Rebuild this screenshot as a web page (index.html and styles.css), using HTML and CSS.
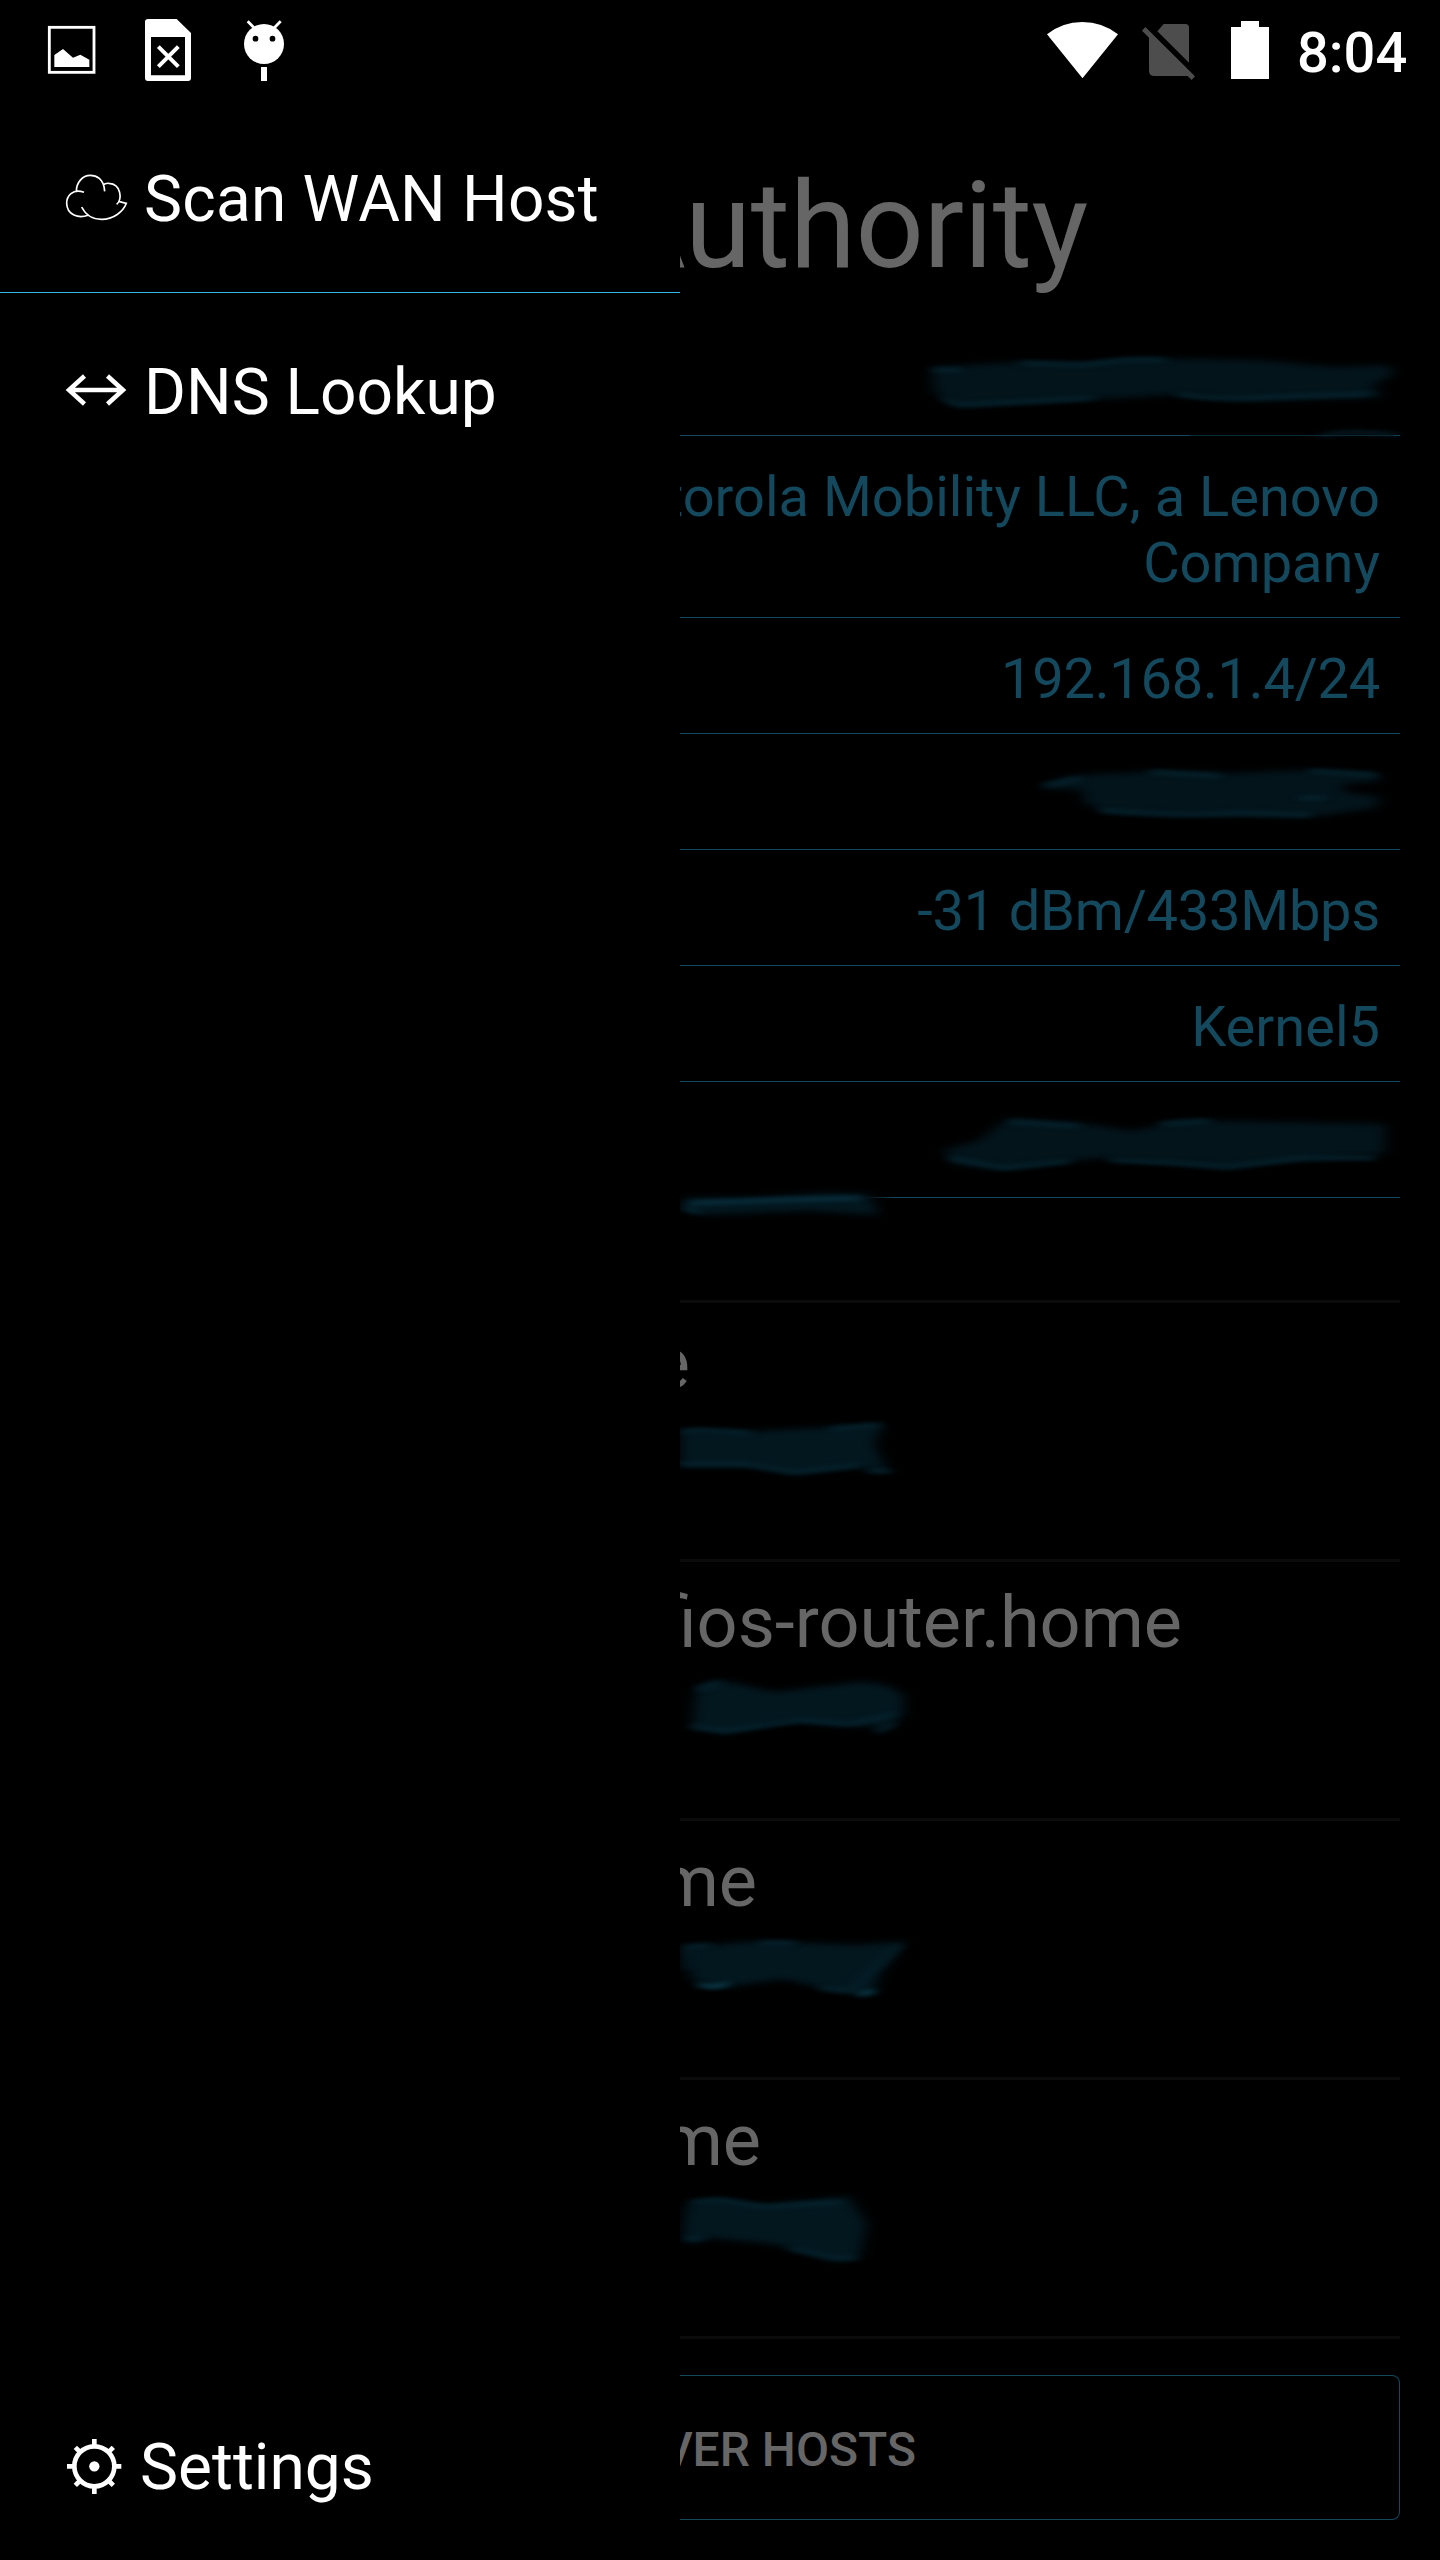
FILE: index.html
```html
<!DOCTYPE html>
<html lang="en">
<head>
<meta charset="utf-8">
<title>Port Authority</title>
<link rel="stylesheet" href="styles.css">
</head>
<body>
<div class="screen">
  <header class="status">
    <div class="status-group">
      <svg class="status-left" viewBox="0 0 960 288" aria-hidden="true">
        <rect x="148" y="82" width="134" height="135" fill="none" stroke="#fff" stroke-width="8.5"/>
        <path d="M163 201V165L189 147L219 173L241 164L268 179V201Z" fill="#fff"/>
        <path fill-rule="evenodd" d="M444 57H530L573 99V234Q573 243 564 243H444Q435 243 435 234V66Q435 57 444 57ZM453 111V226H555V111Z" fill="#fff"/>
        <path d="M475 140L535 200M535 140L475 200" stroke="#fff" stroke-width="12"/>
        <circle cx="792" cy="132" r="60" fill="#fff"/>
        <path d="M743 64L768 89M842 64L817 89" stroke="#fff" stroke-width="8.5"/>
        <circle cx="766.500" cy="116" r="8.500"/><circle cx="817.500" cy="116" r="8.500"/>
        <rect x="783" y="201" width="18" height="42" fill="#fff"/>
      </svg>
    </div>
    <div class="status-group">
      <svg class="status-right" viewBox="240 0 720 288" aria-hidden="true">
        <path d="M261 103Q307 66 367 66T474 103L367.500 235Z" fill="#fff"/>
        <path d="M611 72H676Q687 72 687 83V188L592 94ZM567 107L687 226L680 228H583Q567 228 567 212ZM556 81L705 229L695 240L546 92Z" fill="#4d4d4d"/>
        <path d="M843 63H897V81H927V237H813V81H843Z" fill="#fff"/>
      </svg>
      <span class="clock">8:04</span>
    </div>
  </header>
  <div class="panes">
    <nav class="drawer">
      <a class="item item-scan">
        <svg class="icon" viewBox="192 516 192 150" aria-hidden="true">
          <path d="M252 577C217 564 200 590 200 610C201 646 236 656 264 646M245 621C262 655 287 658 305 658C340 658 370 635 379 610L358 605M350 613C367 598 364 552 327 550Q316 549 309 555M314 574C312 535 287 526 271 526C247 526 229 548 229 574" fill="none" stroke="#fff" stroke-width="5"/>
        </svg>
        <span>Scan WAN Host</span>
      </a>
      <a class="item item-dns">
        <svg class="icon" viewBox="0 0 64 50" aria-hidden="true">
          <path d="M5 26H60M20.500 12L5 26L20.500 40M43.500 12L59 26L43.500 40" fill="none" stroke="#fff" stroke-width="4.500"/>
        </svg>
        <span>DNS Lookup</span>
      </a>
      <a class="item item-settings">
        <svg class="icon icon-gear" viewBox="192 168 180 180" aria-hidden="true">
          <g stroke="#fff" stroke-width="14" fill="none">
            <circle cx="283" cy="259" r="60"/>
            <path d="M283 199V177M283 319V342M223 259H201M343 259H364M239 215L226 202M327 215L340 202M239 303L226 316M327 303L340 316"/>
          </g>
          <circle cx="283" cy="259" r="15.500" fill="#fff"/>
        </svg>
        <span>Settings</span>
      </a>
    </nav>
    <main class="content">
      <h1 class="title">Authority</h1>
      <div class="row"></div>
      <div class="row"><span>torola Mobility LLC, a Lenovo</span><span>Company</span></div>
      <div class="row"><span class="tight">192.168.1.4/24</span></div>
      <div class="row"></div>
      <div class="row"><span class="tight">-31 dBm/433Mbps</span></div>
      <div class="row"><span>Kernel5</span></div>
      <div class="row row-last"></div>
      <div class="list-top"></div>
      <div class="host"><span class="name name-1">e</span></div>
      <div class="host"><span class="name name-2">fios-router.home</span></div>
      <div class="host"><span class="name name-3">me</span></div>
      <div class="host"><span class="name name-4">me</span></div>
      <div class="button"><span>VER HOSTS</span></div>

      <!-- brush strokes hiding private values -->
      <svg class="smears" viewBox="680 0 760 2560" aria-hidden="true">
        <defs>
          <filter id="soft" x="-10%" y="-30%" width="120%" height="160%" color-interpolation-filters="sRGB"><feGaussianBlur stdDeviation="7 3"/></filter>
          <filter id="edge" filterUnits="userSpaceOnUse" x="660" y="300" width="780" height="2000" color-interpolation-filters="sRGB"><feGaussianBlur stdDeviation="6 2"/></filter>
        </defs>
        <path d="M1190 434H1393V437H1190Z" fill="#000" opacity=".4"/>
        <path d="M1320 436Q1350 429 1396 435" fill="none" stroke="#06232e" stroke-width="3" filter="url(#edge)"/>
        <g fill="#03141b" filter="url(#soft)">
          <path d="M931 367L1018 362L1083 363L1137 358L1257 360L1336 367L1386 365L1396 373L1372 386L1385 397L1257 401L1172 395L1083 400L958 407L934 393Z"/>
          <path d="M1038 788Q1060 776 1083 775L1162 771L1232 773L1307 770L1376 773L1384 780L1340 785L1345 792L1381 797L1375 808L1312 817L1177 815L1108 813L1083 802L1083 790Z"/>
          <path d="M943 1150L978 1141L1008 1118L1088 1124L1133 1131L1182 1120L1282 1122L1385 1124V1154L1307 1160L1227 1168L1177 1164L1098 1158L1003 1170L953 1164Z"/>
        </g>
        <g fill="#03171f" filter="url(#soft)">
          <path d="M682 1198L760 1197L824 1193L869 1194L879 1215L809 1211L700 1215L685 1208Z"/>
          <path d="M680 1430L759 1431L884 1424L874 1443L888 1473L859 1467L794 1475L754 1467H680Z"/>
          <path d="M697 1686L720 1680L774 1692L859 1682Q890 1682 904 1696V1715L874 1736L878 1726H844L789 1722L725 1734L692 1728Z"/>
          <path d="M682 1947L759 1941L859 1945L906 1941L879 1976L874 1995L834 1991L784 1979L720 1988L692 1980Z"/>
          <path d="M687 2203L720 2198L764 2205L849 2196L867 2224L859 2259L834 2261L774 2244L710 2238L690 2244L682 2236Z"/>
        </g>
        <g fill="none" stroke="#06242f" stroke-width="4" filter="url(#edge)">
          <path d="M943 398L958 405L1093 398M1177 394Q1220 401 1272 397L1370 394M1020 363L1083 365L1125 360H1165M934 370H960"/>
          <path d="M1100 810Q1180 817 1240 813L1310 815M1150 772L1220 776M1310 771L1375 775M1045 786L1080 778M1300 798H1325"/>
          <path d="M950 1158L1003 1168L1070 1161M1110 1160L1177 1163L1227 1167L1300 1158H1375M1160 1124L1210 1121M1010 1122L1080 1126"/>
          <path d="M684 1207L698 1213M690 1203L780 1200L860 1198" stroke="#083040"/>
          <path d="M680 1432L700 1430L750 1433M680 1464H745L794 1472L860 1465M868 1471H890M830 1429L880 1425"/>
          <path d="M698 1690L720 1682M692 1726L725 1731L800 1720L850 1724L895 1714M878 1732L895 1723"/>
          <path d="M686 1970V1947L710 1945M760 1943H795M820 1988L850 1991L900 1945"/>
          <path d="M698 1984Q712 1990 728 1983M858 1995L874 1991" stroke="#0c4354"/>
          <path d="M692 2202L720 2200L764 2207L840 2202M685 2239L703 2238M790 2248L834 2258H855"/>
        </g>
      </svg>
    </main>
  </div>
</div>
</body>
</html>
```
FILE: styles.css
```css
* { box-sizing: border-box; }
body { margin: 0; background: #000; color: #fff; font-family: Roboto, "Liberation Sans", sans-serif; }
.screen { display: flex; flex-direction: column; width: 1440px; height: 2560px; overflow: hidden; }

.status { display: flex; justify-content: space-between; height: 96px; }
.status-group { display: flex; }
.status-left { width: 320px; height: 96px; }
.status-right { width: 240px; height: 96px; }
.clock { width: 129px; padding: 20px 0 0 17px; margin-right: 31px; font-size: 56px; font-weight: 500; line-height: 66px; white-space: nowrap; }

.panes { display: flex; flex: 1; }
.drawer { display: flex; flex-direction: column; width: 680px; height: 2464px; }
.item { display: flex; padding-left: 64px; font-size: 64px; line-height: 75px; white-space: nowrap; }
.icon { width: 64px; height: 50px; margin: 11px 16px 0 0; flex: none; }
.item-scan { height: 197px; padding-top: 66px; border-bottom: 1px solid #33b5e5; letter-spacing: .2px; }
.item-scan .icon { margin-top: 10px; }
.item-dns { padding-top: 62px; }
.item-dns .icon { margin-top: 9px; }
.item-settings { margin-top: auto; height: 130px; }
.icon-gear { width: 60px; height: 60px; margin: 6px 16px 0 0; }

.content { position: relative; display: flex; flex-direction: column; width: 760px; padding-right: 40px; overflow: hidden; color: #666; }
.title { display: flex; justify-content: flex-end; height: 224px; margin: 0; padding: 60px 312px 0 0; font-size: 120px; font-weight: 400; line-height: 140px; letter-spacing: -.35px; }
.row { display: flex; flex-direction: column; align-items: flex-end; min-height: 116px; padding: 28px 20px 21px 0; border-bottom: 1px solid #14485c; color: #14485c; font-size: 56px; line-height: 66px; white-space: nowrap; }
.tight { letter-spacing: -.23px; }
.row-last { border-image: linear-gradient(90deg, transparent 180px, #14485c 215px) 1; }
.list-top { height: 105px; border-bottom: 3px solid #0b0b0b; }
.host { display: flex; height: 259px; padding-top: 18px; border-bottom: 3px solid #0b0b0b; font-size: 72px; line-height: 85px; }
.name { display: flex; justify-content: flex-end; white-space: nowrap; }
.name-1 { width: 10px; }
.name-2 { width: 502px; }
.name-3 { width: 77px; }
.name-4 { width: 81px; }
.button { display: flex; height: 145px; margin-top: 36px; padding-top: 45px; border: 1px solid #14485c; border-left: 0; border-radius: 0 8px 8px 0; font-size: 48px; font-weight: 500; line-height: 57px; white-space: nowrap; }
.button span { display: flex; justify-content: flex-end; width: 236px; }
.smears { position: absolute; left: 0; top: -96px; width: 760px; height: 2560px; pointer-events: none; }
```
